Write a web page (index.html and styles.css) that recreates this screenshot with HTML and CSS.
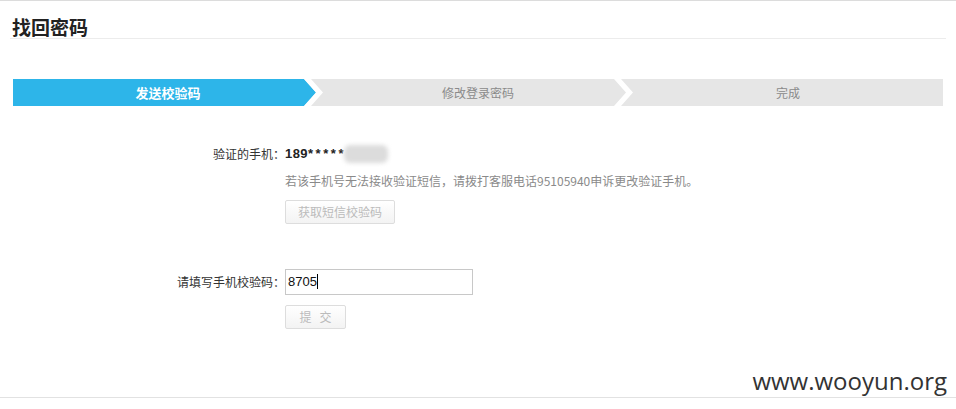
FILE: index.html
```html
<!DOCTYPE html>
<html lang="zh-CN">
<head>
<meta charset="utf-8">
<title>找回密码</title>
<link rel="stylesheet" href="styles.css">
</head>
<body>
<div class="page">
  <h2 class="title">找回密码</h2>
  <div class="steps">
    <div class="step active"><span class="step-text">发送校验码</span></div>
    <div class="step"><span class="step-text">修改登录密码</span></div>
    <div class="step last"><span class="step-text">完成</span></div>
  </div>
  <div class="form">
    <div class="row row-phone">
      <div class="label">验证的手机：</div>
      <div class="value"><span class="phone">189<span class="mask">*****</span></span><span class="blur"></span></div>
    </div>
    <div class="row row-help">
      <div class="label"></div>
      <div class="value help">若该手机号无法接收验证短信，请拨打客服电话95105940申诉更改验证手机。</div>
    </div>
    <div class="row row-btn1">
      <div class="label"></div>
      <div class="value"><span class="btn btn-sms">获取短信校验码</span></div>
    </div>
    <div class="row row-code">
      <div class="label">请填写手机校验码：</div>
      <div class="value"><div class="input">8705<span class="caret"></span></div></div>
    </div>
    <div class="row row-btn2">
      <div class="label"></div>
      <div class="value"><span class="btn btn-submit">提&nbsp;&nbsp;&nbsp;交</span></div>
    </div>
  </div>
  <div class="footer">
    <span class="watermark">www.wooyun.org</span>
  </div>
</div>
</body>
</html>
```
FILE: styles.css
```css
html, body {
  margin: 0;
  padding: 0;
  background: #fff;
}
body {
  font-family: "Noto Sans CJK SC", "Liberation Sans", sans-serif;
  font-size: 12px;
  color: #333;
}
.page {
  border-top: 1px solid #dcdcdc;
  position: relative;
  height: 408px;
}
.title {
  margin: 0 10px;
  padding: 15px 0 0 2px;
  height: 22px;
  line-height: 22px;
  font-size: 19px;
  font-weight: bold;
  color: #222;
  border-bottom: 1px solid #ececec;
}
.steps {
  display: flex;
  margin: 40px 13px 0;
  height: 27px;
  background: #e6e6e6;
}
.step {
  flex: 1;
  position: relative;
  text-align: center;
  line-height: 27px;
  color: #8a8a8a;
  font-size: 12px;
}
.step-text {
  position: relative;
  z-index: 2;
}
.step.active {
  color: #fff;
  font-weight: bold;
  font-size: 13px;
}
.step.active::before {
  content: "";
  position: absolute;
  left: 0; top: 0; right: 0; bottom: 0;
  background: #2db5e9;
  clip-path: polygon(0 0, calc(100% - 19px) 0, calc(100% - 7px) 50%, calc(100% - 19px) 100%, 0 100%);
  z-index: 1;
}
.step::after {
  content: "";
  position: absolute;
  top: 0;
  right: 0;
  width: 19px;
  height: 27px;
  background: #fff;
  clip-path: polygon(0 0, 7px 0, 19px 50%, 7px 100%, 0 100%, 12px 50%);
  z-index: 3;
}
.step.last::after {
  display: none;
}
.form {
  margin-top: 38px;
}
.row {
  display: flex;
}
.label {
  width: 285px;
  text-align: right;
  flex: none;
}
.value {
  flex: none;
}
.row-phone {
  line-height: 20px;
}
.phone {
  font-family: "Liberation Sans", Arial, sans-serif;
  font-weight: bold;
  font-size: 13px;
  color: #222;
  vertical-align: top;
  letter-spacing: 0.4px;
}
.mask {
  letter-spacing: 2.6px;
}
.blur {
  display: inline-block;
  width: 44px;
  height: 18px;
  margin-left: -2px;
  background: #dcdcdc;
  border-radius: 6px;
  filter: blur(2px);
  vertical-align: top;
  margin-top: 1px;
}
.row-help {
  margin-top: 7px;
  line-height: 20px;
}
.help {
  color: #8a8a8a;
}
.row-btn1 {
  margin-top: 9px;
}
.btn {
  display: inline-block;
  box-sizing: border-box;
  height: 24px;
  line-height: 22px;
  border: 1px solid #dddddd;
  border-radius: 2px;
  background: linear-gradient(#ffffff, #f3f3f3);
  color: #bbbbbb;
  text-align: center;
}
.btn-sms {
  width: 110px;
}
.btn-submit {
  width: 61px;
}
.row-code {
  margin-top: 45px;
  line-height: 26px;
}
.input {
  box-sizing: border-box;
  width: 188px;
  height: 26px;
  line-height: 24px;
  border: 1px solid #c8c8c8;
  padding-left: 2px;
  font-family: "Liberation Sans", Arial, sans-serif;
  font-size: 13px;
  color: #111;
}
.caret {
  display: inline-block;
  width: 1px;
  height: 15px;
  background: #000;
  vertical-align: middle;
  margin-top: -2px;
}
.row-btn2 {
  margin-top: 10px;
}
.footer {
  position: absolute;
  left: 0;
  right: 0;
  top: 396px;
  border-top: 1px solid #e2e2e2;
}
.watermark {
  position: absolute;
  right: 9px;
  bottom: 3px;
  font-family: "Open Sans", "DejaVu Sans", sans-serif;
  font-size: 24px;
  color: #333;
  line-height: 28px;
}
```
